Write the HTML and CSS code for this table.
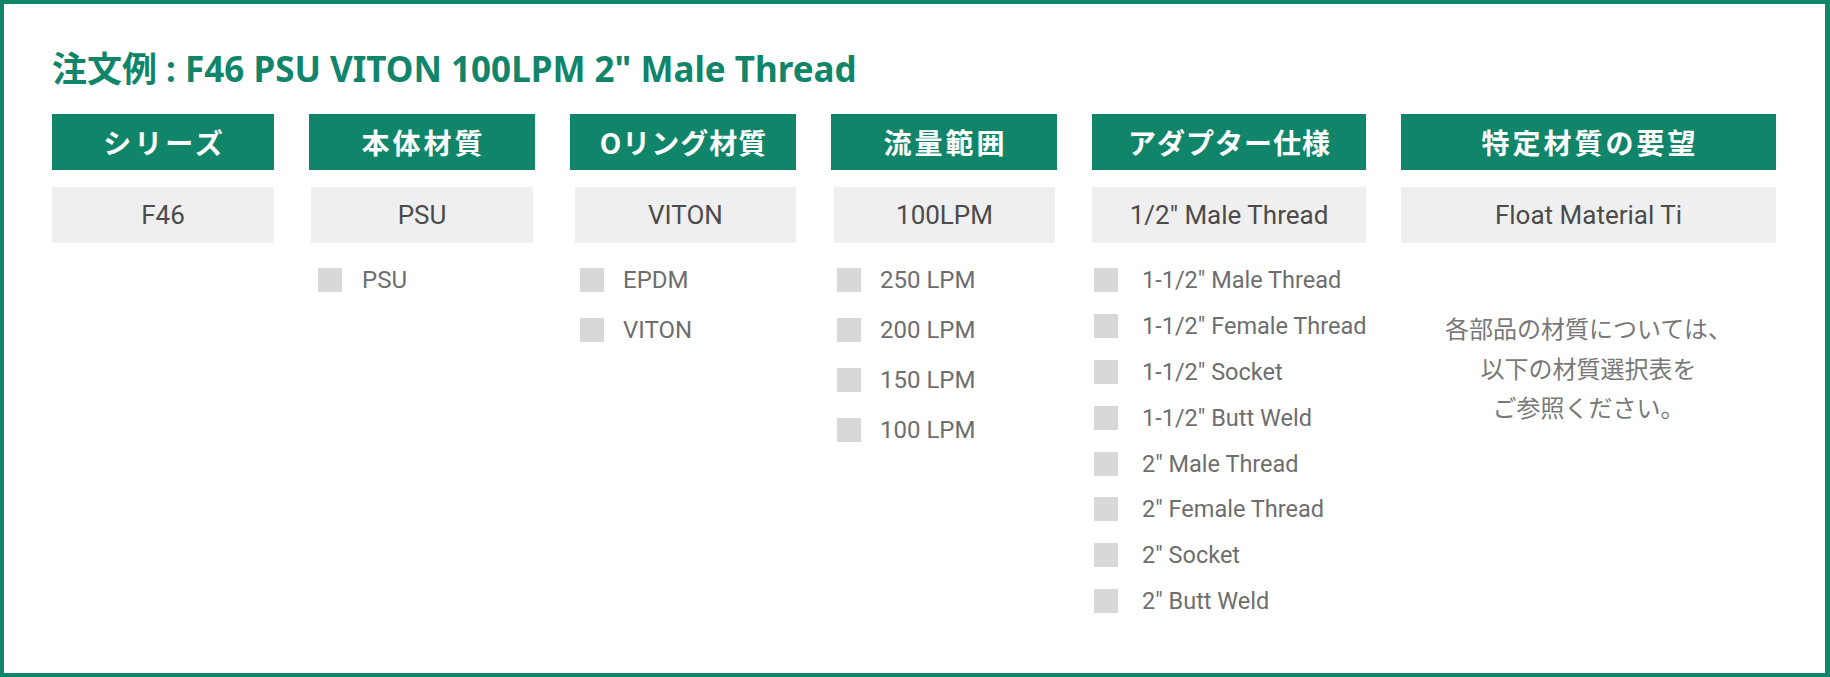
FILE: index.html
```html
<!DOCTYPE html>
<html lang="ja">
<head>
<meta charset="utf-8">
<title>注文例</title>
<link rel="stylesheet" href="styles.css">
</head>
<body>
<div class="frame">
  <h1 class="title">注文例 : F46 PSU VITON 100LPM 2" Male Thread</h1>
  <div class="grid">
    <div class="col c1">
      <div class="head">シリーズ</div>
      <div class="value">F46</div>
    </div>
    <div class="col c2">
      <div class="head">本体材質</div>
      <div class="value">PSU</div>
      <ul class="list">
        <li class="item"><span class="box"></span><span>PSU</span></li>
      </ul>
    </div>
    <div class="col c3">
      <div class="head">Oリング材質</div>
      <div class="value">VITON</div>
      <ul class="list">
        <li class="item"><span class="box"></span><span>EPDM</span></li>
        <li class="item"><span class="box"></span><span>VITON</span></li>
      </ul>
    </div>
    <div class="col c4">
      <div class="head">流量範囲</div>
      <div class="value">100LPM</div>
      <ul class="list">
        <li class="item"><span class="box"></span><span>250 LPM</span></li>
        <li class="item"><span class="box"></span><span>200 LPM</span></li>
        <li class="item"><span class="box"></span><span>150 LPM</span></li>
        <li class="item"><span class="box"></span><span>100 LPM</span></li>
      </ul>
    </div>
    <div class="col c5">
      <div class="head">アダプター仕様</div>
      <div class="value">1/2" Male Thread</div>
      <ul class="list">
        <li class="item"><span class="box"></span><span>1-1/2" Male Thread</span></li>
        <li class="item"><span class="box"></span><span>1-1/2" Female Thread</span></li>
        <li class="item"><span class="box"></span><span>1-1/2" Socket</span></li>
        <li class="item"><span class="box"></span><span>1-1/2" Butt Weld</span></li>
        <li class="item"><span class="box"></span><span>2" Male Thread</span></li>
        <li class="item"><span class="box"></span><span>2" Female Thread</span></li>
        <li class="item"><span class="box"></span><span>2" Socket</span></li>
        <li class="item"><span class="box"></span><span>2" Butt Weld</span></li>
      </ul>
    </div>
    <div class="col c6">
      <div class="head">特定材質の要望</div>
      <div class="value">Float Material Ti</div>
      <p class="note">各部品の材質については、<br>以下の材質選択表を<br>ご参照ください。</p>
    </div>
  </div>
</div>
</body>
</html>
```

FILE: styles.css
```css
html, body {
  margin: 0;
  padding: 0;
  background: #ffffff;
}

.frame {
  box-sizing: border-box;
  width: 1830px;
  height: 677px;
  border: 4px solid #11856a;
  border-right-width: 5px;
  padding: 45px 0 0 48px;
  font-family: Roboto, "Noto Sans CJK JP", sans-serif;
  overflow: hidden;
}

.title {
  margin: 0;
  font-family: "Noto Sans", "Noto Sans CJK JP", sans-serif;
  font-size: 35px;
  line-height: 40px;
  font-weight: 700;
  color: #11856a;
  letter-spacing: 0;
}

.grid {
  margin-top: 25px;
  display: grid;
  grid-template-columns: 222px 226px 226px 226px 274px 375px;
  column-gap: 35px;
  align-items: start;
}

.col {
  display: flex;
  flex-direction: column;
}

.head {
  height: 56px;
  background: #11856a;
  color: #ffffff;
  font-family: "Noto Sans CJK JP", sans-serif;
  font-weight: 700;
  font-size: 28px;
  letter-spacing: 3px;
  padding-left: 3px;
  display: flex;
  align-items: center;
  justify-content: center;
}

.c3 .head,
.c5 .head {
  letter-spacing: 1px;
  padding-left: 1px;
}

.value {
  margin-top: 17px;
  height: 56px;
  background: #efefef;
  color: #4b4b4b;
  font-size: 26px;
  display: flex;
  align-items: center;
  justify-content: center;
}

.list {
  list-style: none;
  margin: 0;
  padding: 12px 0 0 0;
}

.item {
  height: 50px;
  display: flex;
  align-items: center;
  gap: 20px;
  color: #6e6e6e;
  font-size: 24px;
  white-space: nowrap;
}

.box {
  width: 24px;
  height: 24px;
  background: #d8d8d8;
  flex: none;
}

.c2 .value { margin-left: 2px; margin-right: 2px; }
.c2 .list { padding-left: 9px; }

.c3 .value { margin-left: 5px; }
.c3 .list { padding-left: 10px; }
.c3 .item { gap: 19px; }

.c4 .value { margin-left: 3px; margin-right: 2px; }
.c4 .list { padding-left: 6px; }
.c4 .item { gap: 19px; }

.c5 .list { padding-left: 2px; padding-top: 14px; }
.c5 .item { height: 45.9px; gap: 24px; font-size: 23.5px; }

.note {
  margin: 65px 0 0 0;
  text-align: center;
  font-family: "Noto Sans CJK JP", sans-serif;
  font-size: 24px;
  line-height: 39.5px;
  color: #787878;
}
```
